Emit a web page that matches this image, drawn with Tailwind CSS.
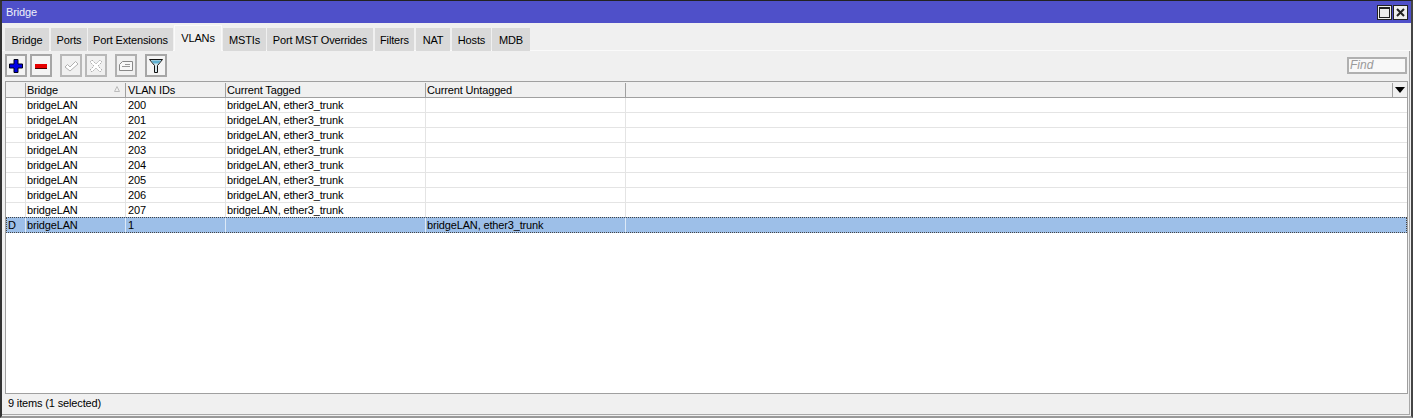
<!DOCTYPE html>
<html lang="en">
<head>
<meta charset="UTF-8">
<title>Bridge</title>
<script src="https://cdn.jsdelivr.net/npm/@tailwindcss/browser@4"></script>
</head>
<body class="h-[418px] w-[1413px] overflow-hidden bg-white font-['Liberation_Sans',sans-serif] text-[11px] leading-[15px] tracking-[-0.15px] text-black">
<div class="flex h-[418px] flex-col border-t border-r-2 border-b-2 border-l-2 border-t-[#222] border-r-[#444] border-b-[#999] border-l-[#333] bg-[#f0f0f0]">
  <!-- title bar -->
  <div class="flex h-[22px] shrink-0 items-center justify-between bg-[#4f50c9] pr-[3px] pl-1 text-[#f0f0fa]">
    <span>Bridge</span>
    <div class="flex gap-[1px]">
      <div class="flex size-[15px] items-center justify-center border border-[#222] bg-[#eeeeee]"><div class="size-[11px] border border-t-2 border-[#222]"></div></div>
      <div class="flex size-[15px] items-center justify-center border border-[#222] bg-[#eeeeee]">
        <svg width="9" height="9" viewBox="0 0 9 9"><path d="M1 1l7 7M8 1l-7 7" stroke="#222" stroke-width="2"/></svg>
      </div>
    </div>
  </div>

  <!-- tabs -->
  <div class="flex h-[28px] shrink-0 items-end border-b border-[#fafafa] pl-[3px]">
    <div class="mb-[-1px] flex h-[23px] w-[44px] items-center justify-center bg-[#d9d9d9] pt-[1px]">Bridge</div>
    <div class="mb-[-1px] ml-[2px] flex h-[23px] w-[36px] items-center justify-center bg-[#d9d9d9] pt-[1px]">Ports</div>
    <div class="mb-[-1px] ml-[1px] flex h-[23px] w-[85px] items-center justify-center bg-[#d9d9d9] pt-[1px]">Port Extensions</div>
    <div class="mb-[-1px] ml-[1px] flex h-[26px] w-[48px] items-center justify-center border-x border-t border-[#fafafa] bg-[#f0f0f0] pb-[1px]">VLANs</div>
    <div class="mb-[-1px] ml-[1px] flex h-[23px] w-[43px] items-center justify-center bg-[#d9d9d9] pt-[1px]">MSTIs</div>
    <div class="mb-[-1px] ml-[1px] flex h-[23px] w-[106px] items-center justify-center bg-[#d9d9d9] pt-[1px]">Port MST Overrides</div>
    <div class="mb-[-1px] ml-[2px] flex h-[23px] w-[39px] items-center justify-center bg-[#d9d9d9] pt-[1px]">Filters</div>
    <div class="mb-[-1px] ml-[2px] flex h-[23px] w-[34px] items-center justify-center bg-[#d9d9d9] pt-[1px]">NAT</div>
    <div class="mb-[-1px] ml-[2px] flex h-[23px] w-[39px] items-center justify-center bg-[#d9d9d9] pt-[1px]">Hosts</div>
    <div class="mb-[-1px] ml-[1px] flex h-[23px] w-[38px] items-center justify-center bg-[#d9d9d9] pt-[1px]">MDB</div>
  </div>

  <!-- content frame -->
  <div class="mr-[1px] flex min-h-0 flex-1 flex-col border-r border-b border-[#a8a8a8] pl-[3px]">
    <!-- toolbar -->
    <div class="flex h-[30px] shrink-0 items-start pt-[3px]">
      <div class="flex h-[23px] w-[22px] items-center justify-center border-2 border-[#a6a6a6] bg-[#f4f4f4]">
        <svg width="16" height="16" viewBox="0 0 16 16"><path d="M6 1.500h4v4.500h4.500v4H10v4.500H6V10H1.500V6H6z" fill="#0000e6" stroke="#000018"/></svg>
      </div>
      <div class="ml-[3px] flex h-[23px] w-[22px] items-center justify-center border-2 border-[#a6a6a6] bg-[#f4f4f4]">
        <svg width="14" height="8" viewBox="0 0 14 8"><rect x="1" y="2" width="12" height="4" fill="#e60000"/><path d="M1 6.500h12" stroke="#400"/></svg>
      </div>
      <div class="ml-[8px] flex h-[23px] w-[22px] items-center justify-center border-2 border-[#b8b8b8] bg-[#f0f0f0]">
        <svg width="15" height="12" viewBox="0 0 15 12"><path d="M1 7l2.500-2.500L6 7l5.500-5.500L14 4l-8 7z" fill="#fff" stroke="#b0b0b0"/></svg>
      </div>
      <div class="ml-[3px] flex h-[23px] w-[22px] items-center justify-center border-2 border-[#b8b8b8] bg-[#f0f0f0]">
        <svg width="14" height="14" viewBox="0 0 14 14"><path d="M3 1l4 4 4-4 2 2-4 4 4 4-2 2-4-4-4 4-2-2 4-4-4-4z" fill="#fff" stroke="#b0b0b0" stroke-dasharray="2 1"/></svg>
      </div>
      <div class="ml-[8px] flex h-[23px] w-[22px] items-center justify-center border-2 border-[#b0b0b0] bg-[#f0f0f0]">
        <svg width="14" height="12" viewBox="0 0 14 12"><path d="M.5 4.500l3-3h10v9H.5z" fill="#f8f8f8" stroke="#888"/><path d="M6 4.500h5M3 6.500h8" stroke="#999"/></svg>
      </div>
      <div class="ml-[8px] flex h-[23px] w-[22px] items-center justify-center border-2 border-[#a6a6a6] bg-[#f4f4f4]">
        <svg width="14" height="16" viewBox="0 0 14 16"><path d="M.5 1.500h13L8.500 7.500v7h-3v-7z" fill="#d8e8ee" stroke="#111"/><path d="M2 2.500h10L9.500 5.500h-5z" fill="#5fb0d0"/></svg>
      </div>
      <div class="mt-[3px] mr-[2px] ml-auto h-[17px] w-[60px] border-2 border-[#b0b0b0] bg-[#f8f8f8] pl-[1px] text-[12px] leading-[13px] tracking-normal text-[#9a9a9a] italic">Find</div>
    </div>

    <!-- table -->
    <div class="mr-[1px] flex min-h-0 flex-1 flex-col border border-[#a0a0a0] bg-white">
      <div class="flex h-[16px] shrink-0 border-b border-[#a0a0a0] bg-[#f0f0f0] pt-[1px]">
        <div class="w-[20px] border-r border-[#a0a0a0]"></div>
        <div class="relative w-[100px] border-r border-[#a0a0a0] pl-[1px]">Bridge<svg class="absolute top-[3px] right-[5px]" width="6" height="6" viewBox="0 0 6 6"><path d="M3 .5L5.500 5.500H.5z" fill="none" stroke="#bbb"/></svg></div>
        <div class="w-[100px] border-r border-[#a0a0a0] pl-[2px]">VLAN IDs</div>
        <div class="w-[200px] border-r border-[#a0a0a0] pl-[1px]">Current Tagged</div>
        <div class="w-[200px] border-r border-[#a0a0a0] pl-[1px]">Current Untagged</div>
        <div class="flex-1 border-r border-[#a0a0a0]"></div>
        <div class="flex w-[14px] items-center justify-center"><svg width="10" height="6" viewBox="0 0 10 6"><path d="M0 0h10L5 6z" fill="#000"/></svg></div>
      </div>

      <div class="flex h-[15px] shrink-0 border-b border-[#e4e4e4]"><div class="w-[20px] border-r border-[#e4e4e4]"></div><div class="w-[100px] border-r border-[#e4e4e4] pl-[1px]">bridgeLAN</div><div class="w-[100px] border-r border-[#e4e4e4] pl-[2px]">200</div><div class="w-[200px] border-r border-[#e4e4e4] pl-[1px]">bridgeLAN, ether3_trunk</div><div class="w-[200px] border-r border-[#e4e4e4]"></div></div>
      <div class="flex h-[15px] shrink-0 border-b border-[#e4e4e4]"><div class="w-[20px] border-r border-[#e4e4e4]"></div><div class="w-[100px] border-r border-[#e4e4e4] pl-[1px]">bridgeLAN</div><div class="w-[100px] border-r border-[#e4e4e4] pl-[2px]">201</div><div class="w-[200px] border-r border-[#e4e4e4] pl-[1px]">bridgeLAN, ether3_trunk</div><div class="w-[200px] border-r border-[#e4e4e4]"></div></div>
      <div class="flex h-[15px] shrink-0 border-b border-[#e4e4e4]"><div class="w-[20px] border-r border-[#e4e4e4]"></div><div class="w-[100px] border-r border-[#e4e4e4] pl-[1px]">bridgeLAN</div><div class="w-[100px] border-r border-[#e4e4e4] pl-[2px]">202</div><div class="w-[200px] border-r border-[#e4e4e4] pl-[1px]">bridgeLAN, ether3_trunk</div><div class="w-[200px] border-r border-[#e4e4e4]"></div></div>
      <div class="flex h-[15px] shrink-0 border-b border-[#e4e4e4]"><div class="w-[20px] border-r border-[#e4e4e4]"></div><div class="w-[100px] border-r border-[#e4e4e4] pl-[1px]">bridgeLAN</div><div class="w-[100px] border-r border-[#e4e4e4] pl-[2px]">203</div><div class="w-[200px] border-r border-[#e4e4e4] pl-[1px]">bridgeLAN, ether3_trunk</div><div class="w-[200px] border-r border-[#e4e4e4]"></div></div>
      <div class="flex h-[15px] shrink-0 border-b border-[#e4e4e4]"><div class="w-[20px] border-r border-[#e4e4e4]"></div><div class="w-[100px] border-r border-[#e4e4e4] pl-[1px]">bridgeLAN</div><div class="w-[100px] border-r border-[#e4e4e4] pl-[2px]">204</div><div class="w-[200px] border-r border-[#e4e4e4] pl-[1px]">bridgeLAN, ether3_trunk</div><div class="w-[200px] border-r border-[#e4e4e4]"></div></div>
      <div class="flex h-[15px] shrink-0 border-b border-[#e4e4e4]"><div class="w-[20px] border-r border-[#e4e4e4]"></div><div class="w-[100px] border-r border-[#e4e4e4] pl-[1px]">bridgeLAN</div><div class="w-[100px] border-r border-[#e4e4e4] pl-[2px]">205</div><div class="w-[200px] border-r border-[#e4e4e4] pl-[1px]">bridgeLAN, ether3_trunk</div><div class="w-[200px] border-r border-[#e4e4e4]"></div></div>
      <div class="flex h-[15px] shrink-0 border-b border-[#e4e4e4]"><div class="w-[20px] border-r border-[#e4e4e4]"></div><div class="w-[100px] border-r border-[#e4e4e4] pl-[1px]">bridgeLAN</div><div class="w-[100px] border-r border-[#e4e4e4] pl-[2px]">206</div><div class="w-[200px] border-r border-[#e4e4e4] pl-[1px]">bridgeLAN, ether3_trunk</div><div class="w-[200px] border-r border-[#e4e4e4]"></div></div>
      <div class="flex h-[14px] shrink-0"><div class="w-[20px] border-r border-[#e4e4e4]"></div><div class="w-[100px] border-r border-[#e4e4e4] pl-[1px]">bridgeLAN</div><div class="w-[100px] border-r border-[#e4e4e4] pl-[2px]">207</div><div class="w-[200px] border-r border-[#e4e4e4] pl-[1px]">bridgeLAN, ether3_trunk</div><div class="w-[200px] border-r border-[#e4e4e4]"></div></div>
      <div class="flex h-[16px] shrink-0 border border-dotted border-[#444] bg-[#9dbfe8]"><div class="w-[19px] border-r border-[#dce8f6] pl-[1px]">D</div><div class="w-[100px] border-r border-[#dce8f6] pl-[1px]">bridgeLAN</div><div class="w-[100px] border-r border-[#dce8f6] pl-[2px]">1</div><div class="w-[200px] border-r border-[#dce8f6]"></div><div class="w-[200px] border-r border-[#dce8f6] pl-[1px]">bridgeLAN, ether3_trunk</div></div>
    </div>

    <!-- status bar -->
    <div class="flex h-[20px] shrink-0 items-center pb-[1px] pl-[3px]">9 items (1 selected)</div>
  </div>
  <div class="h-[1px] shrink-0"></div>
</div>
</body>
</html>
